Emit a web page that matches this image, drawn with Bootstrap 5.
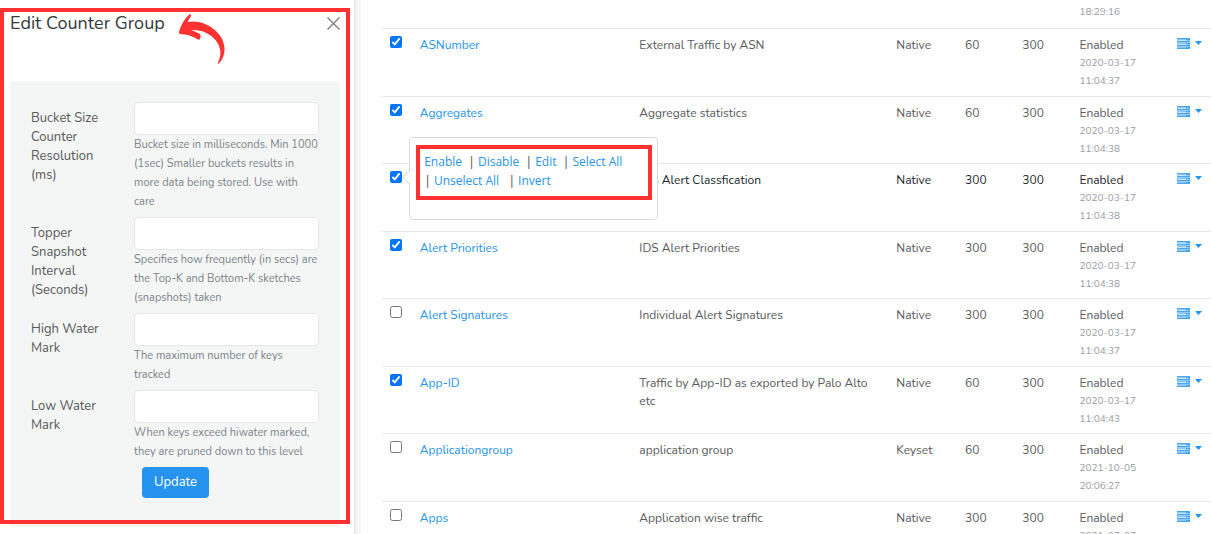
<!DOCTYPE html>
<html lang="en">
<head>
<meta charset="utf-8">
<meta name="viewport" content="width=device-width, initial-scale=1">
<title>Edit Counter Group</title>
<link href="https://cdn.jsdelivr.net/npm/bootstrap@5.3.0/dist/css/bootstrap.min.css" rel="stylesheet">
<style>
  :root { --ui-blue: #2693ee; --ui-red: #ff3131; }
  body { font-family: Nunito, Lato, sans-serif; font-size: 12px; line-height: 18px; color: #58595b; background: #fff; }
  a { color: var(--ui-blue); text-decoration: none; }

  .edit-panel { flex: 0 0 29.2%; padding: 8px 14px 0 10px; }
  .edit-panel h1 { font-size: 18px; line-height: 30px; color: #343a40; }
  .panel-outline { inset: 8px 4px auto 0; height: 516px; border: 4px solid var(--ui-red); pointer-events: none; }
  .panel-close { width: 13px; height: 13px; color: #868686; }
  .pointer-arrow { left: 178px; top: 14px; width: 48px; height: 51px; }
  .edit-form { margin-top: 43px; padding: 21px 21px 29px; background: #f4f6f5; border-radius: 4px; }
  .field-row { display: grid; grid-template-columns: 103fr 185fr; margin-bottom: 6px; line-height: 19px; }
  .field-row label { padding: 7px 20px 0 0; font-size: 13px; }
  .field-row .form-control { height: 33px; border-color: #e9e6e2; border-radius: 4px; }
  .field-help { font-size: 11px; color: #7b838a; }
  .btn-update { height: 31px; margin-left: 8px; padding: 0 12px; font-size: 13px; color: #fff; background: var(--ui-blue); border: 0; border-radius: 4px; }

  .gutter-bar { flex: 0 0 7px; background: #f7f7f7; border-left: 2px solid #eaecec; }

  .list-area { padding: 0 2px 0 21px; }
  .counter-table { table-layout: fixed; width: 100%; }
  .counter-table td { height: 68px; padding: 7px 8px 4px; vertical-align: top; border-top: 1px solid #e9e9e9; }
  .counter-table tr:nth-child(odd) td { height: 67px; }
  .counter-table tr:first-child td { height: 28px; padding: 3px 8px 6px; border-top: 0; }
  .counter-table tr.is-current { color: #212529; }
  .stamp { color: #989da3; font-size: 10px; }
  .row-check { display: block; width: 12px; height: 12px; margin: 0; accent-color: #0075ff; }
  .row-menu { height: 15px; gap: 5px; }

  .action-pop { left: 19px; top: -34px; width: 249px; height: 83px; padding: 7px 5px 0 6px; background: #fff; border: 1px solid #d9d9d9; border-radius: 4px; font-family: "Open Sans", sans-serif; font-size: 12px; line-height: 19px; color: #444; }
  .action-pop::before { content: ""; position: absolute; left: -6px; top: 35px; width: 9px; height: 9px; background: #fff; border: 1px solid #d9d9d9; border-width: 0 0 1px 1px; transform: rotate(45deg); }
  .action-frame { height: 55px; padding: 3px 4px; border: 4px solid var(--ui-red); }
</style>
</head>
<body>
<svg class="d-none" aria-hidden="true">
  <symbol id="rack" viewBox="0 0 13 11">
    <path fill="#8fc8f7" d="M0 0h13v3H0zM0 4h13v3H0zM0 8h13v3H0z"/>
    <path fill="#4ba6f2" d="M0 0h13v1H0zM0 3h13v1H0zM0 7h13v1H0zM0 10h13v1H0z"/>
    <path fill="#2693ee" d="M9 1h1v1H9zM11 1h2v1h-2zM9 5h1v1H9zM11 5h2v1h-2zM9 9h1v1H9zM11 9h2v1h-2z"/>
    <path fill="#fff" d="M1 2h8v1H1zM1 6h8v1H1z" opacity=".5"/>
  </symbol>
</svg>

<div class="d-flex vh-100 overflow-hidden">
  <aside class="edit-panel position-relative">
    <header class="d-flex justify-content-between align-items-center">
      <h1 class="m-0 fw-normal">Edit Counter Group</h1>
      <button type="button" class="btn p-0 border-0 d-flex" aria-label="Close">
        <svg class="panel-close" viewBox="0 0 13 13"><path d="M.5.5l12 12M12.500.5l-12 12" stroke="currentColor" stroke-width="1.500" fill="none"/></svg>
      </button>
    </header>

    <form class="edit-form">
      <div class="field-row">
        <label for="bucket">Bucket Size Counter Resolution (ms)</label>
        <div><input id="bucket" class="form-control" type="text">
          <div class="field-help">Bucket size in milliseconds. Min 1000 (1sec) Smaller buckets results in more data being stored. Use with care</div></div>
      </div>
      <div class="field-row">
        <label for="topper">Topper Snapshot Interval (Seconds)</label>
        <div><input id="topper" class="form-control" type="text">
          <div class="field-help">Specifies how frequently (in secs) are the Top-K and Bottom-K sketches (snapshots) taken</div></div>
      </div>
      <div class="field-row">
        <label for="high">High Water Mark</label>
        <div><input id="high" class="form-control" type="text">
          <div class="field-help">The maximum number of keys tracked</div></div>
      </div>
      <div class="field-row">
        <label for="low">Low Water Mark</label>
        <div><input id="low" class="form-control" type="text">
          <div class="field-help">When keys exceed hiwater marked, they are pruned down to this level</div></div>
      </div>
      <div class="field-row mb-0">
        <span></span>
        <div><button type="button" class="btn btn-update">Update</button></div>
      </div>
    </form>

    <div class="panel-outline position-absolute"></div>
    <svg class="pointer-arrow position-absolute" viewBox="0 0 48 51" aria-hidden="true">
      <path fill="#ff3131" d="M1 18Q4 7 11.500.3Q13.500-.3 13 2L9.500 8C22 5.500 36 12 43 23C48.500 33 47.500 42 40.800 49.800C40 49.800 39.800 49 40.200 48C44.500 39 42.500 30 34 22.500C28 17.500 21 15.500 13.500 16L22 20Q23.500 23 21 26Q12 20 2 20Q.8 20 1 18z"/>
    </svg>
  </aside>

  <div class="gutter-bar"></div>

  <main class="list-area flex-grow-1">
    <table class="counter-table">
      <colgroup>
        <col style="width:29px"><col style="width:26.5%"><col style="width:31%"><col style="width:8.300%"><col style="width:6.900%"><col style="width:6.900%"><col style="width:11.800%"><col style="width:41px">
      </colgroup>
      <tbody id="rows"></tbody>
    </table>
  </main>
</div>

<template id="pop">
  <div class="action-pop position-absolute">
    <div class="action-frame">
      <a href="#">Enable</a>&nbsp; | <a href="#">Disable</a>&nbsp; | <a href="#">Edit</a>&nbsp; | <a href="#">Select All</a><br>
      | <a href="#">Unselect All</a>&nbsp;&nbsp; | <a href="#">Invert</a>
    </div>
  </div>
</template>

<script src="https://cdn.jsdelivr.net/npm/bootstrap@5.3.0/dist/js/bootstrap.bundle.min.js"></script>
<script>
  const groups = [
    [1, 'ASNumber', 'External Traffic by ASN', 'Native', 60, '2020-03-17', '11:04:37'],
    [1, 'Aggregates', 'Aggregate statistics', 'Native', 60, '2020-03-17', '11:04:38'],
    [1, 'Alert Classification', 'IDS Alert Classfication', 'Native', 300, '2020-03-17', '11:04:38'],
    [1, 'Alert Priorities', 'IDS Alert Priorities', 'Native', 300, '2020-03-17', '11:04:38'],
    [0, 'Alert Signatures', 'Individual Alert Signatures', 'Native', 300, '2020-03-17', '11:04:37'],
    [1, 'App-ID', 'Traffic by App-ID as exported by Palo Alto etc', 'Native', 60, '2020-03-17', '11:04:43'],
    [0, 'Applicationgroup', 'application group', 'Keyset', 60, '2021-10-05', '20:06:27'],
    [0, 'Apps', 'Application wise traffic', 'Native', 300, '2021-07-07', '']
  ];
  const current = 2;
  document.getElementById('rows').innerHTML =
    '<tr><td colspan="6"></td><td class="stamp">18:29:16</td><td></td></tr>' +
    groups.map((g, i) => `<tr class="${i === current ? 'is-current' : ''}">
      <td><div class="position-relative"><input type="checkbox" class="row-check" aria-label="${g[1]}" ${g[0] ? 'checked' : ''}>${i === current ? document.getElementById('pop').innerHTML : ''}</div></td>
      <td>${i === current ? '' : `<a href="#">${g[1]}</a>`}</td><td>${g[2]}</td><td>${g[3]}</td><td>${g[4]}</td><td>300</td>
      <td>Enabled<div class="stamp">${g[5]}<br>${g[6]}</div></td>
      <td><button type="button" class="btn p-0 border-0 d-flex align-items-center row-menu" aria-label="Options for ${g[1]}">
        <svg width="13" height="11"><use href="#rack"/></svg><svg width="7" height="4" viewBox="0 0 7 4"><path d="M0 0h7L3.500 4z" fill="#2693ee"/></svg></button></td>
    </tr>`).join('');
</script>
</body>
</html>
